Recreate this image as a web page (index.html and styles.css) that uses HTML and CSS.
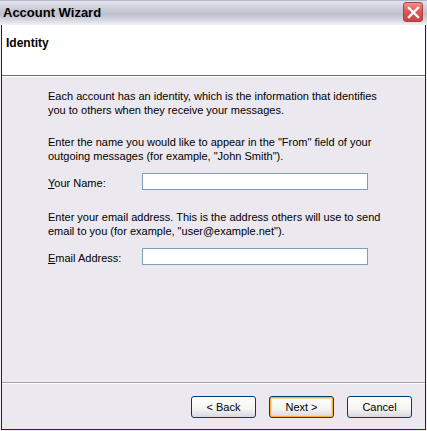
FILE: index.html
```html
<!DOCTYPE html>
<html lang="en">
<head>
  <meta charset="UTF-8">
  <title>Account Wizard</title>
  <link rel="stylesheet" href="styles.css">
</head>
<body>
  <div class="window">
    <div class="titlebar">
      <span class="title">Account Wizard</span>
      <button class="close" aria-label="Close">
        <svg width="13" height="13" viewBox="0 0 13 13">
          <path d="M2 2 L11 11 M11 2 L2 11" stroke="#fff" stroke-width="2.4" stroke-linecap="square"/>
        </svg>
      </button>
    </div>

    <div class="frame">
      <div class="header">
        <h1>Identity</h1>
      </div>

      <div class="content">
        <p>Each account has an identity, which is the information that identifies you to others when they receive your messages.</p>

        <p class="gap">Enter the name you would like to appear in the "From" field of your outgoing messages (for example, "John Smith").</p>
        <div class="field">
          <label for="your-name"><u>Y</u>our Name:</label>
          <input type="text" id="your-name">
        </div>

        <p class="gap">Enter your email address. This is the address others will use to send email to you (for example, "user@example.net").</p>
        <div class="field">
          <label for="email"><u>E</u>mail Address:</label>
          <input type="text" id="email">
        </div>
      </div>

      <div class="footer">
        <button class="btn">&lt; Back</button>
        <button class="btn default">Next &gt;</button>
        <button class="btn">Cancel</button>
      </div>
    </div>
  </div>
</body>
</html>
```

FILE: styles.css
```css
html, body {
  margin: 0;
  padding: 0;
}
body {
  width: 427px;
  height: 431px;
  font-family: 'Liberation Sans', Arial, sans-serif;
  font-size: 11px;
  color: #000;
  background: #f0eef2;
}
.window {
  height: 431px;
  display: flex;
  flex-direction: column;
}
.titlebar {
  height: 25px;
  flex: none;
  display: flex;
  align-items: center;
  justify-content: space-between;
  padding: 0 3px 0 3px;
  box-sizing: border-box;
  border-top: 1px solid #b0b4c8;
  background: linear-gradient(#e4e6ee, #cfd1dc 25%, #bcbfce 55%, #d6d8e2 80%, #f2f2f6);
}
.title {
  font-weight: bold;
  font-size: 13px;
  margin-top: -1px;
}
.close {
  width: 20px;
  height: 20px;
  padding: 0;
  margin-right: 1px;
  margin-top: -2px;
  border: 1px solid #a84040;
  border-radius: 3px;
  background: linear-gradient(#f0928a, #dc5a52 45%, #c8443e);
  display: flex;
  align-items: center;
  justify-content: center;
}
.frame {
  flex: 1;
  margin: 0 1px 1px 1px;
  border: 1px solid #800000;
  border-top: none;
  display: flex;
  flex-direction: column;
  background: #ebe9ef;
}
.header {
  height: 51px;
  background: #fff;
  border-bottom: 1px solid #707070;
  box-shadow: 0 1px 0 #fff;
  padding: 11px 0 0 4px;
  box-sizing: border-box;
}
.header h1 {
  margin: 0;
  font-size: 12px;
  font-weight: bold;
}
.content {
  flex: 1;
  padding: 14px 0 0 46px;
}
.content p {
  margin: 0;
  width: 340px;
  line-height: 13.5px;
}
.content p.gap {
  margin-top: 19px;
}
.field + p.gap {
  margin-top: 21px;
}
.field {
  display: flex;
  align-items: center;
  margin-top: 10px;
}
.field label {
  width: 94px;
  padding-top: 2px;
}
.field input {
  width: 226px;
  height: 17px;
  box-sizing: border-box;
  border: 1px solid #7f9db9;
  background: #fff;
  margin: 0;
}
.footer {
  height: 47px;
  border-top: 1px solid #a0a0a8;
  box-shadow: inset 0 1px 0 #fff;
  display: flex;
  justify-content: flex-end;
  align-items: flex-start;
  gap: 13px;
  padding: 13px 13px 0 0;
  box-sizing: border-box;
}
.btn {
  width: 65px;
  height: 22px;
  font-family: 'Liberation Sans', Arial, sans-serif;
  font-size: 11px;
  color: #000;
  border: 1px solid #003c74;
  border-radius: 3px;
  background: linear-gradient(#ffffff, #f4f4f0 60%, #d8d8e4);
  padding: 0;
}
.btn.default {
  box-shadow: inset 0 0 0 1px #f8b040, inset 0 0 0 2px #fcd890;
}
```
